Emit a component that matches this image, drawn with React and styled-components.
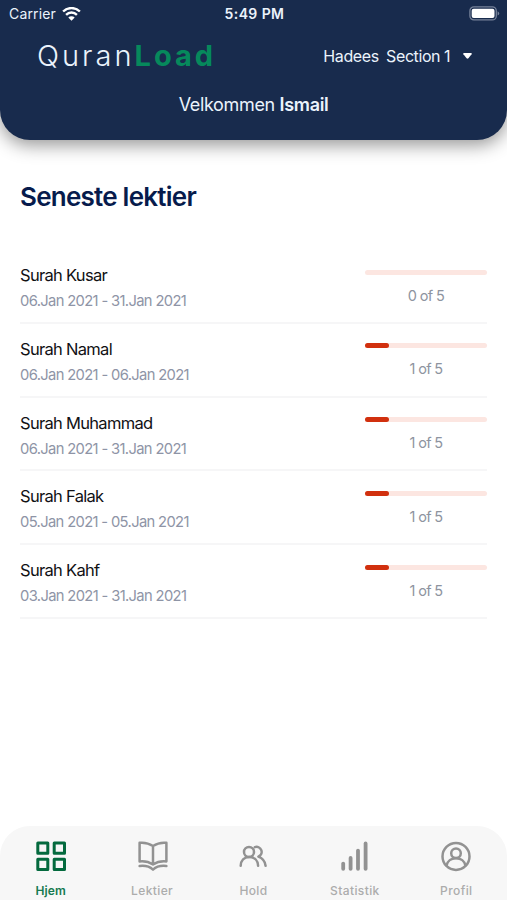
import React, { useState } from "react"
import styled, { createGlobalStyle } from "styled-components"

const GlobalStyle = createGlobalStyle`
  * {
    box-sizing: border-box;
  }

  body {
    margin: 0;
    background-color: white;
    font-family: "Inter", "Liberation Sans", sans-serif;
  }

  p, h1, h2 {
    margin: 0;
    white-space: nowrap;
  }
`

const DivScreen = styled.div`
  display: flex;
  flex-direction: column;
  width: 100%;
  height: 100vh;
  min-height: 900px;
  overflow: hidden;
`

const Header = styled.header`
  flex: none;
  height: 140px;
  border-radius: 0 0 30px 30px;
  background-color: rgb(24, 43, 77);
  color: rgb(235, 243, 252);
  box-shadow: 0 5px 18px rgba(0, 0, 0, 0.42);
`
const DivStatus = styled.div`
  display: grid;
  grid-template-columns: 1fr auto 1fr;
  align-items: center;
  height: 28px;
  padding: 0 7px 0 9px;
`
const DivCarrier = styled.div`
  display: flex;
  align-items: center;
  gap: 6px;
`
const PCarrier = styled.p`
  font-size: 14px;
  line-height: 28px;
  letter-spacing: 0.15px;
`
const PClock = styled.p`
  font-size: 14px;
  font-weight: 600;
  line-height: 28px;
  letter-spacing: 0.4px;
`
const SvgBattery = styled.svg`
  justify-self: end;
  margin-top: -2px;
`

const DivBrand = styled.div`
  display: flex;
  justify-content: space-between;
  align-items: center;
  height: 56px;
  padding: 0 35px 0 37px;
`
const H1Logo = styled.h1`
  font-size: 29px;
  font-weight: 300;
  line-height: 56px;
  letter-spacing: 3px;
`
const SpanLoad = styled.span`
  color: rgb(6, 137, 92);
  font-weight: 700;
`
const ButtonSection = styled.button`
  cursor: pointer;
  display: flex;
  align-items: center;
  gap: 13px;
  border: none;
  padding: 0;
  background: none;
  color: inherit;
  font-family: inherit;
  font-size: 16px;
  letter-spacing: -0.4px;
  word-spacing: -0.4px;
  white-space: pre;
`
const PWelcome = styled.p`
  font-size: 18px;
  line-height: 42px;
  letter-spacing: -0.34px;
  text-align: center;

  b {
    font-weight: 600;
  }
`

const Main = styled.main`
  flex: 1;
  padding: 38.5px 20px 0;
`
const H2Title = styled.h2`
  color: rgb(7, 27, 76);
  font-size: 26px;
  font-weight: 600;
  line-height: 36px;
  letter-spacing: -0.76px;
`
const DivList = styled.div`
  margin-top: 35.5px;
`
const DivItem = styled.div`
  display: flex;
  justify-content: space-between;
  border-bottom: 2px solid rgb(246, 246, 247);
  height: 73.75px;
`
const DivLesson = styled.div`
  padding-top: 13px;
`
const PName = styled.p`
  color: rgb(17, 17, 20);
  font-size: 16.5px;
  line-height: 24px;
  letter-spacing: -0.7px;
`
const PDate = styled.p`
  margin-top: 2px;
  color: rgb(142, 148, 166);
  font-size: 14.75px;
  line-height: 24px;
  letter-spacing: -0.65px;
`
const DivProgress = styled.div`
  display: flex;
  flex-direction: column;
  align-items: center;
  width: 122px;
  padding-top: 19.6px;
`
const DivTrack = styled.div`
  width: 100%;
  height: 5px;
  border-radius: 3px;
  background-color: rgb(252, 230, 225);
`
const DivBar = styled.div`
  height: 5px;
  border-radius: 3px;
  background-color: rgb(209, 48, 14);
`
const PCount = styled.p`
  margin-top: 9px;
  color: rgb(142, 148, 160);
  font-size: 14.5px;
  line-height: 24px;
  letter-spacing: -0.65px;
`

const Nav = styled.nav`
  flex: none;
  display: grid;
  grid-template-columns: repeat(5, 1fr);
  height: 74px;
  border-radius: 30px 30px 0 0;
  background-color: rgb(247, 247, 247);
`
const DivTab = styled.div`
  cursor: pointer;
  display: flex;
  flex-direction: column;
  align-items: center;
  padding-top: 14px;
  color: ${(props) => (props.$active ? "rgb(4, 106, 62)" : "rgb(146, 146, 146)")};
`
const PTab = styled.p`
  margin-top: 11px;
  color: ${(props) => (props.$active ? "rgb(22, 122, 80)" : "rgb(172, 172, 172)")};
  font-size: 12px;
  font-weight: ${(props) => (props.$active ? "600" : "500")};
  line-height: 16px;
  letter-spacing: ${(props) => (props.$active ? "0.1px" : "0.4px")};
`
const SvgTab = styled.svg`
  width: 32px;
  height: 32px;
  fill: none;
  stroke: currentColor;
  stroke-width: 2.5;
  stroke-linecap: round;
  stroke-linejoin: round;
`

const WifiIcon = () => (
  <svg width="19" height="15" viewBox="0 0 19 15" fill="none" stroke="white" strokeWidth="2.4">
    <path d="M1.1 4.5a12 12 0 0 1 16.8 0" />
    <path d="M4.1 7.8a7.6 7.6 0 0 1 10.8 0" />
    <path d="M6.3 10.5a4.6 4.6 0 0 1 6.4 0L9.5 13.7z" fill="white" stroke="none" />
  </svg>
)

const BatteryIcon = () => (
  <SvgBattery width="31" height="15" viewBox="0 0 31 15">
    <rect x="0.9" y="0.9" width="26.4" height="13" rx="4" fill="none" stroke="rgb(118, 130, 153)" strokeWidth="1.3" />
    <rect x="2.7" y="2.7" width="22.8" height="9.4" rx="2" fill="white" />
    <path d="M28.6 5.2q1.6 .8 1.6 2.2t-1.6 2.2z" fill="rgb(118, 130, 153)" />
  </SvgBattery>
)

const HomeIcon = () => (
  <SvgTab viewBox="0 0 32 32">
    <g strokeWidth="3">
      <rect x="2.8" y="3" width="10" height="10.3" />
      <rect x="19.2" y="3" width="10.3" height="10.3" />
      <rect x="2.8" y="19.2" width="10" height="10.3" />
      <rect x="19.2" y="19.2" width="10.3" height="10.3" />
    </g>
  </SvgTab>
)

const BookIcon = () => (
  <SvgTab viewBox="0 0 32 32">
    <path d="M17 6Q11 2 3.6 2.8V21.4Q11 20.6 17 24.4Q23 20.6 30.4 21.4V2.8Q23 2 17 6zV24.4" />
    <path d="M3.6 26Q12 25 17 29.6Q22 25 30.4 26" />
  </SvgTab>
)

const GroupIcon = () => (
  <SvgTab viewBox="0 0 32 32">
    <circle cx="12" cy="12" r="5" />
    <path d="M3.7 25.8c.2-5.4 3.4-8.8 8.5-8.8s8.7 3.4 8.9 8.8" />
    <path d="M17.8 7.2a5 5 0 0 1 3.6 9.4c4.6 1.8 6.8 4.8 7.2 9.2" />
  </SvgTab>
)

const StatsIcon = () => (
  <SvgTab viewBox="0 0 32 32">
    <g strokeWidth="3.8">
      <path d="M4.2 23.6V28.8" />
      <path d="M11.6 18V28.8" />
      <path d="M19 10.6V28.8" />
      <path d="M26.6 3.4V28.8" />
    </g>
  </SvgTab>
)

const ProfileIcon = () => (
  <SvgTab viewBox="0 0 32 32">
    <circle cx="16" cy="16.4" r="13.5" />
    <circle cx="16" cy="13.2" r="4.8" />
    <path d="M6.6 25.4C7.4 21 11.2 18.2 16 18.2s8.6 2.8 9.4 7.2" />
  </SvgTab>
)

const lessons = [
  { name: "Surah Kusar", date: "06.Jan 2021 - 31.Jan 2021", done: 0, total: 5 },
  { name: "Surah Namal", date: "06.Jan 2021 - 06.Jan 2021", done: 1, total: 5 },
  { name: "Surah Muhammad", date: "06.Jan 2021 - 31.Jan 2021", done: 1, total: 5 },
  { name: "Surah Falak", date: "05.Jan 2021 - 05.Jan 2021", done: 1, total: 5 },
  { name: "Surah Kahf", date: "03.Jan 2021 - 31.Jan 2021", done: 1, total: 5 },
]

const tabs = [
  { label: "Hjem", Icon: HomeIcon },
  { label: "Lektier", Icon: BookIcon },
  { label: "Hold", Icon: GroupIcon },
  { label: "Statistik", Icon: StatsIcon },
  { label: "Profil", Icon: ProfileIcon },
]

const LessonItem = ({ name, date, done, total }) => (
  <DivItem>
    <DivLesson>
      <PName>{name}</PName>
      <PDate>{date}</PDate>
    </DivLesson>
    <DivProgress>
      <DivTrack>
        <DivBar style={{ width: `${(done / total) * 100}%` }} />
      </DivTrack>
      <PCount>
        {done} of {total}
      </PCount>
    </DivProgress>
  </DivItem>
)

const App = () => {
  const [active, setActive] = useState("Hjem")

  return (
    <DivScreen>
      <GlobalStyle />
      <Header>
        <DivStatus>
          <DivCarrier>
            <PCarrier>Carrier</PCarrier>
            <WifiIcon />
          </DivCarrier>
          <PClock>5:49 PM</PClock>
          <BatteryIcon />
        </DivStatus>
        <DivBrand>
          <H1Logo>
            Quran<SpanLoad>Load</SpanLoad>
          </H1Logo>
          <ButtonSection>
            {"Hadees  Section 1"}
            <svg width="9" height="6" viewBox="0 0 9 6" fill="white">
              <path d="M.9 0h7.2q1 .2.5 1.2L5.4 5.2q-.9.9-1.8 0L.4 1.2Q-.1.2.9 0z" />
            </svg>
          </ButtonSection>
        </DivBrand>
        <PWelcome>
          Velkommen <b>Ismail</b>
        </PWelcome>
      </Header>
      <Main>
        <H2Title>Seneste lektier</H2Title>
        <DivList>
          {lessons.map((lesson) => (
            <LessonItem key={lesson.name} {...lesson} />
          ))}
        </DivList>
      </Main>
      <Nav>
        {tabs.map(({ label, Icon }) => (
          <DivTab key={label} $active={label === active} onClick={() => setActive(label)}>
            <Icon />
            <PTab $active={label === active}>{label}</PTab>
          </DivTab>
        ))}
      </Nav>
    </DivScreen>
  )
}

export default App
